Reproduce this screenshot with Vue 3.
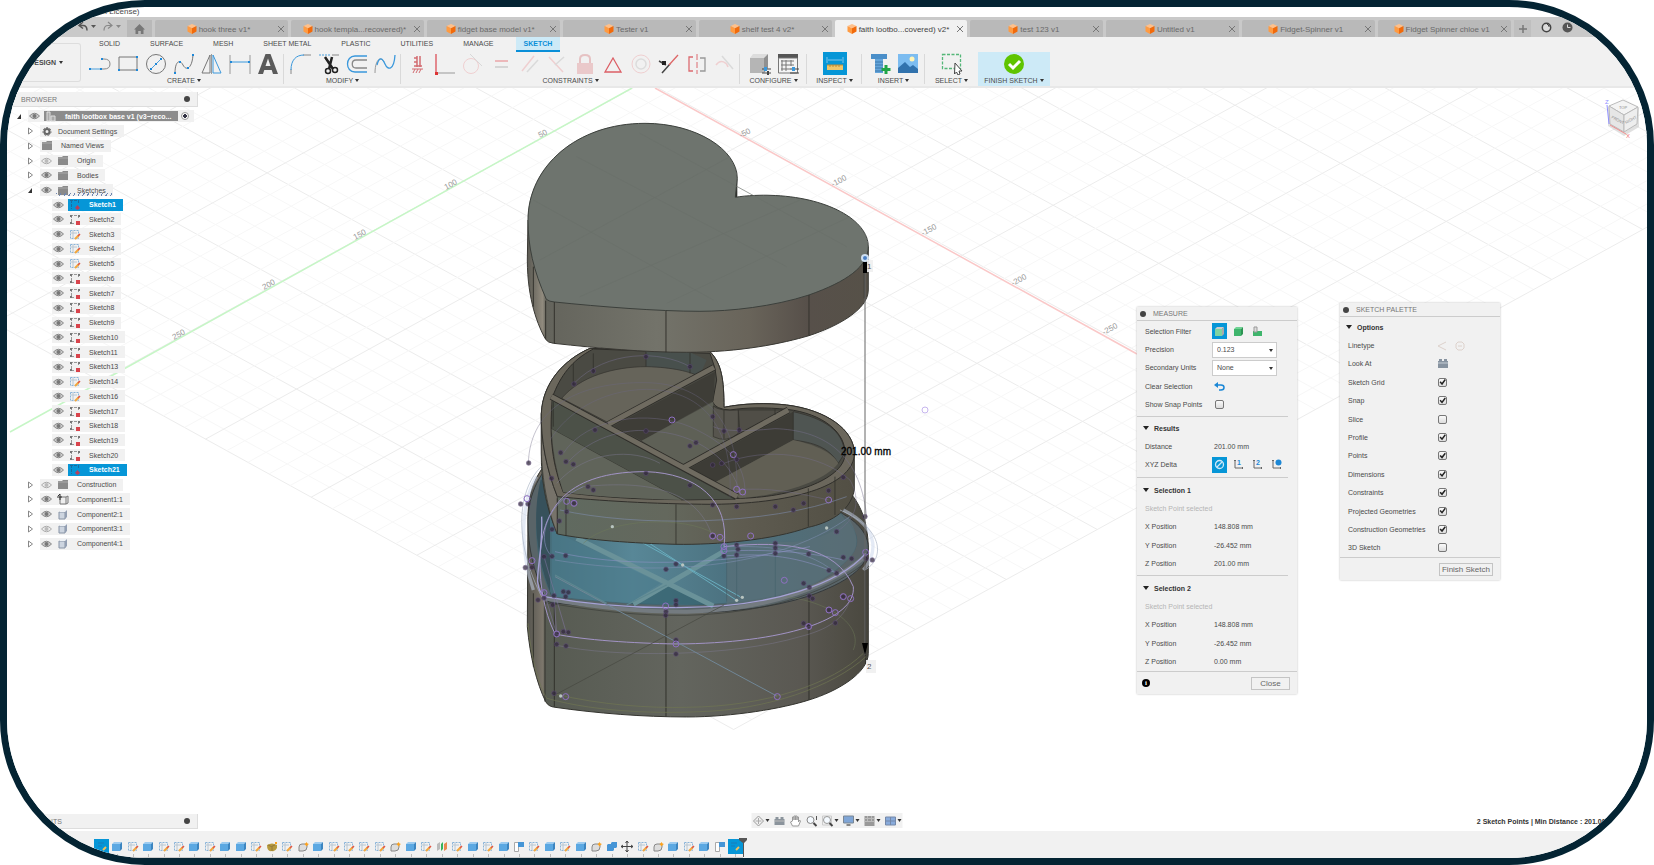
<template>
  <div class="frame">
    <header class="title-bar"><span class="title-text">Autodesk Fusion (Education License)</span></header>

    <div class="doc-bar">
      <div class="doc-left">
        <button class="plain" aria-label="Undo"><svg width="22" height="12" viewBox="0 0 22 12"><path d="M6 1 2 4.500l4 3M2 4.500h4q4 0 4 5" fill="none" stroke="#555" stroke-width="1.500" /><path d="M14 4h5l-2.500 3z" fill="#555" /></svg></button>
        <button class="plain" aria-label="Redo"><svg width="22" height="12" viewBox="0 0 22 12"><path d="M6 1l4 3.500-4 3M10 4.500H6q-4 0-4 5" fill="none" stroke="#888" stroke-width="1.200" /><path d="M14 4h5l-2.500 3z" fill="#888" /></svg></button>
        <button class="home" aria-label="Home"><svg width="11" height="10" viewBox="0 0 11 10"><path d="M5.500 0 11 5.500H9.500V10H6.800V7H4.200v3H1.500V5.500H0z" fill="#777" /></svg></button>
      </div>
      <div class="doc-tabs">
        <div v-for="tab in docTabs" :key="tab" class="doc-tab" :class="{ active: tab === activeTab }">
          <button class="doc-name" @click="activeTab = tab">
            <svg width="10" height="10" viewBox="0 0 10 10"><path d="M5 0l4.500 2L5 4.200.5 2z" fill="#ffc08a" /><path d="M.5 2 5 4.200V10L.5 7.600z" fill="#ff9b42" /><path d="M9.500 2 5 4.200V10l4.500-2.400z" fill="#f26a0a" /></svg>
            <span>{{ tab }}</span>
          </button>
          <button class="plain close" aria-label="Close tab"><svg width="6" height="6" viewBox="0 0 6 6"><path d="M0 0l6 6M6 0L0 6" stroke="#777" /></svg></button>
        </div>
      </div>
      <div class="doc-right">
        <button class="add" aria-label="New tab"><svg width="8" height="8" viewBox="0 0 8 8"><path d="M4 0v8M0 4h8" stroke="#777" stroke-width="1.500" /></svg></button>
        <svg width="11" height="11" viewBox="0 0 11 11"><circle cx="5.500" cy="5.500" r="4.200" fill="#ddd" stroke="#444" stroke-width="1.500" /><path d="M5 1l3 3M8 2v3" stroke="#444" /></svg>
        <svg width="11" height="11" viewBox="0 0 11 11"><circle cx="5.500" cy="5.500" r="5" fill="#555" /><path d="M5.500 2.500v3h3" fill="none" stroke="#ddd" /></svg>
      </div>
    </div>

    <section class="ribbon">
      <button class="workspace">DESIGN <i class="caret"></i></button>
      <div class="ribbon-main">
        <nav class="ribbon-tabs">
          <button v-for="t in ribbonTabs" :key="t" :class="{ active: t === ribbonTab }" @click="ribbonTab = t">{{ t }}</button>
        </nav>
        <div class="groups">
          <div v-for="g in groups" :key="g.name" class="group" :class="g.cls">
            <div class="tools">
              <button v-for="i in g.icons" :key="i" class="tool" :aria-label="i">
                <svg width="22" height="22" viewBox="0 0 22 22" fill="none" v-html="icons[i]"></svg>
              </button>
            </div>
            <button class="group-name">{{ g.name }} <i class="caret"></i></button>
          </div>
        </div>
      </div>
    </section>

    <main class="viewport">
      <svg class="scene" viewBox="7 88 1640 743" preserveAspectRatio="xMidYMid slice">
        <defs>
          <linearGradient id="side" x1="0" x2="1">
            <stop offset="0" stop-color="#5a5952" />
            <stop offset="0.045" stop-color="#918b7e" />
            <stop offset="0.055" stop-color="#64645c" />
            <stop offset="0.38" stop-color="#73736a" />
            <stop offset="0.65" stop-color="#69645a" />
            <stop offset="0.82" stop-color="#57504a" />
            <stop offset="1" stop-color="#565148" />
          </linearGradient>
          <linearGradient id="base" x1="0" x2="1">
            <stop offset="0" stop-color="#55544e" />
            <stop offset="0.045" stop-color="#7c766b" />
            <stop offset="0.055" stop-color="#575b52" />
            <stop offset="0.45" stop-color="#63655e" />
            <stop offset="0.8" stop-color="#5a5852" />
            <stop offset="1" stop-color="#4a483f" />
          </linearGradient>
          <linearGradient id="water" x1="0" x2="1">
            <stop offset="0" stop-color="#436874" />
            <stop offset="0.3" stop-color="#588797" />
            <stop offset="0.6" stop-color="#4c7280" />
            <stop offset="1" stop-color="#566970" />
          </linearGradient>
          <linearGradient id="trayside" x1="0" x2="1">
            <stop offset="0" stop-color="#5f6a60" />
            <stop offset="0.4" stop-color="#64685d" />
            <stop offset="0.65" stop-color="#5e5b50" />
            <stop offset="1" stop-color="#524f44" />
          </linearGradient>
        </defs>

        <!-- ground grid -->
        <g stroke-width="1">
          <line v-for="(l, n) in gridLines" :key="n" :x1="l.x1" :y1="l.y1" :x2="l.x2" :y2="l.y2" :stroke="l.major ? '#ececec' : '#f7f7f7'" />
        </g>
        <path d="M632 88 10 432" stroke="#c6f6c6" stroke-width="1.500" />
        <path d="M655 88 1137 354" stroke="#fac8c8" stroke-width="1.500" />
        <text v-for="a in axisLabels" :key="a.t" class="axis" :transform="`translate(${a.x} ${a.y}) rotate(-28)`">{{ a.t }}</text>

        <g transform="translate(500 330) scale(0.3333)" stroke-linejoin="round">
          <!-- bottom box -->
          <path d="M84 560C84 400 200 300 435 285L1000 440C1080 500 1105 570 1105 660V970C1105 1030 1010 1085 927 1110 850 1135 700 1161 560 1161 430 1161 290 1150 165 1132Q145 1130 137 1115C110 1060 90 980 82 890Z" fill="url(#base)" stroke="#33332e" stroke-width="3" />
          <path :d="heart" transform="translate(0 213)" fill="#596468" stroke="#34383a" stroke-width="3" />
          <path d="M155 798C110 700 95 600 125 440L900 380 1030 560C1090 620 1080 660 1020 710 930 790 750 828 520 825 380 822 250 812 155 798Z" fill="url(#water)" stroke="#40606b" stroke-width="2" />
          <path d="M155 798C110 690 95 560 122 450L150 440V790Z" fill="#37515b" />
          <path d="M680 640 850 635C960 640 1030 590 1045 560 1090 640 1070 670 1020 710 930 790 800 815 680 825Z" fill="#5a6f77" opacity=".7" />
          <path d="M155 740V600L340 690 480 760 390 820 165 800Z" fill="#4b7c8c" opacity=".6" />
          <path d="M390 822 500 765 640 825Z" fill="#2f5b68" opacity=".6" />
          <path d="M230 625 640 828M670 665 400 822" stroke="#6a9299" stroke-width="15" />
          <path d="M165 735 320 820M500 765 380 825" stroke="#5d8790" stroke-width="4" />
          <path d="M340 590 720 800M410 615 710 811" stroke="#68adbe" stroke-width="3" />
          <path d="M680 680V815M710 660V805M826 650V800" stroke="#45626c" stroke-width="2" />
          <path d="M133 805C300 835 420 845 560 845 820 840 1000 760 1095 680" fill="none" stroke="#747b80" stroke-width="12" />
          <path d="M135 818C300 845 420 858 560 856 820 850 1010 775 1104 690" fill="none" stroke="#393c38" stroke-width="2" />
          <path d="M100 790V1010M135 815V1115M163 825V1130M498 858V1160M927 795V1110M1097 690V1000" stroke="#31312c" stroke-width="3" fill="none" />
          <path d="M165 1092C300 1125 450 1135 560 1132 800 1130 1000 1060 1090 970M84 880C95 1000 120 1070 140 1105 300 1150 500 1150 600 1145 800 1140 1000 1070 1098 980" fill="none" stroke="#6f7652" stroke-width="2" />

          <!-- tray -->
          <path d="M124 250C128 160 190 90 270 55L630 65C665 100 672 150 672 232 730 220 800 218 860 225 980 240 1063 300 1063 370V480C1050 550 980 580 925 592 820 630 650 645 528 643 400 640 260 630 172 612 150 560 124 480 124 380Z" fill="url(#trayside)" stroke="#34342f" stroke-width="3" />
          <path d="M172 500C140 420 122 330 124 250V370C128 470 150 560 172 612Z" fill="#77736a" stroke="#34342f" stroke-width="2" />
          <path d="M172 500C140 420 122 330 124 250 128 160 190 90 270 55L630 65C665 100 672 150 672 232 730 220 800 218 860 225 980 240 1063 300 1063 370 1063 460 900 520 640 523 450 522 300 512 172 500Z" fill="#6b675c" stroke="#302f2b" stroke-width="3" />
          <path d="M190 487C160 410 145 330 158 200 180 140 215 90 280 57L630 70 645 115 650 150 638 215Q645 238 690 240C740 232 800 232 860 238 970 250 1040 310 1035 375 1030 440 900 500 720 505 500 515 330 505 190 487Z" fill="#4a4a43" stroke="#2d2c28" stroke-width="3" />
          <path d="M438 60 560 62 620 90 600 135 438 110Z" fill="#48504d" />
          <path d="M185 205C240 140 340 110 440 110 520 112 570 125 600 140L325 278Z" fill="#66645a" stroke="#33322d" stroke-width="2" />
          <path d="M340 288 645 125 640 212 425 332Z" fill="#3e3d37" />
          <path d="M425 332 640 215V310L670 330 730 310 545 405Z" fill="#5e6056" />
          <path d="M640 228Q660 245 715 240V310Q680 340 640 320Z" fill="#57554e" stroke="#302f2b" stroke-width="2" />
          <path d="M715 240 850 240 720 312Z" fill="#504e47" stroke="#302f2b" stroke-width="2" />
          <path d="M570 415 880 245V330L640 460Z" fill="#3d3c36" />
          <path d="M880 245C970 265 1030 300 1034 370L1015 400C985 350 940 338 880 330Z" fill="#4f5552" stroke="#302f2b" stroke-width="2" />
          <path d="M640 460 880 330C950 345 1000 370 1015 400 980 450 850 495 720 505Z" fill="#615f54" />
          <path d="M156 210 155 297 545 510 705 508Z" fill="#4c5148" stroke="#302f2b" stroke-width="2" />
          <path d="M155 297 545 510Q330 505 190 487 160 400 155 297Z" fill="#60645a" />
          <path d="M154 200 712 500M325 283 642 112M552 412 865 240" stroke="#2e2d29" stroke-width="20" />
          <path d="M154 200 712 500M325 283 642 112M552 412 865 240" stroke="#6f6b60" stroke-width="15" />
          <path d="M172 505V612M198 507V618M528 523V643M925 475V590M1005 440V555M220 100V165M280 70V130M438 65V110M570 68V130M672 240V325M825 235V255M160 215V290" stroke="#32322d" stroke-width="2.500" />

          <!-- sketch geometry -->
          <g fill="none">
            <path d="M110 440C60 520 60 660 100 780M1030 540C1150 600 1125 680 1090 720" stroke="#c9d5ec" stroke-width="10" opacity=".5" />
            <path d="M124 410C60 470 30 620 130 810M1020 540C1160 600 1150 690 1095 720" stroke="#a9b4c4" stroke-width="2" />
            <path d="M120 700C120 500 240 425 438 425 590 430 690 510 672 650 860 630 1010 650 1060 770 1070 870 850 940 528 942 400 940 250 930 165 912 130 840 120 760 120 700Z" stroke="#a294c6" stroke-width="3" />
            <path d="M125 560C130 700 90 760 133 800 300 830 450 835 560 832 820 830 1020 760 1097 670" stroke="#a5a2d6" stroke-width="4" />
            <path d="M85 400C90 230 240 155 438 158 600 160 720 260 710 480M150 330C200 250 300 180 440 178 600 180 700 280 690 500" stroke="#6d6884" stroke-width="2" opacity=".6" />
            <path d="M222 160C320 60 480 60 570 110M200 400C300 290 440 300 440 303 600 305 700 400 720 490M640 290Q680 310 825 296C960 300 1080 360 1100 560" stroke="#77708f" stroke-width="2" opacity=".7" />
            <path d="M190 370C260 260 450 240 570 290 680 340 740 400 735 500M672 400C800 350 960 370 1050 450 1090 520 1060 580 1000 610M710 480C800 470 900 490 986 510" stroke="#77708f" stroke-width="2" opacity=".6" />
            <path d="M672 650C760 650 900 640 1010 730M165 690C400 730 800 740 1050 560M180 540C400 590 800 590 1040 500" stroke="#8190b4" stroke-width="2" opacity=".8" />
            <path d="M672 664C800 655 950 670 1030 690M672 678C800 668 900 680 1010 730M165 665C350 710 640 710 930 650M156 679C110 640 130 520 250 470" stroke="#8f94c8" stroke-width="2" opacity=".8" />
            <path d="M165 945C350 985 700 980 900 920 980 900 1030 870 1050 810M170 460C260 360 400 355 480 400M640 630C600 480 450 450 250 470" stroke="#7d7890" stroke-width="2" opacity=".7" />
            <path d="M130 780 170 912M132 680 200 912M162 800 170 912" stroke="#8a7cb0" stroke-width="2" opacity=".7" />
            <path d="M250 640C330 560 560 560 640 610M860 800C1000 820 1090 890 1060 960" stroke="#6f7c58" stroke-width="2" opacity=".7" />
            <path d="M165 740 830 1098" stroke="#708797" stroke-width="3" />
            <path d="M165 1095 672 825" stroke="#454740" stroke-width="2" />
            <circle v-for="(p, n) in dots" :key="'d' + n" :cx="p[0]" :cy="p[1]" r="7" fill="#33293f" opacity=".75" stroke="#5d4a78" stroke-width="2" />
            <circle v-for="(p, n) in rings" :key="'r' + n" :cx="p[0]" :cy="p[1]" r="9" stroke="#8f6fc2" stroke-width="3" />
            <circle v-for="(p, n) in lights" :key="'l' + n" :cx="p[0]" :cy="p[1]" r="5" fill="#b8c4c0" />
          </g>
        </g>

        <!-- lid -->
        <g transform="translate(500 100) scale(0.3333)" stroke-linejoin="round">
          <path d="M84 360 82 480C82 600 115 680 137 718Q143 728 160 730C300 745 430 757 560 757 720 757 850 730 927 707 1010 680 1105 630 1105 570V440L600 500Z" fill="url(#side)" stroke="#393833" stroke-width="3" />
          <path d="M712 235V292H702Z" fill="#2e2f2b" />
          <path :d="heart" fill="#6e746e" stroke="#3b3f3b" stroke-width="3" />
          <path d="M100 500V620M137 602V718M163 606V730M498 632V757M927 585V707M1093 490V595" stroke="#33322d" stroke-width="3" />
          <path d="M100 300 640 600M230 170 860 500M420 100 1040 440M120 480 690 170M240 590 900 300M500 610 1050 350" stroke="#6a706a" stroke-width="2" />
        </g>

        <!-- distance dimension -->
        <path d="M865 258V655" stroke="#666" />
        <path d="M863 262h4v11h-4zM862 643h6l-3 12z" fill="#000" />
        <circle cx="865" cy="258" r="3" fill="#4a7fc4" stroke="#cfe0f2" stroke-width="2" />
        <path d="M867 260h6v12h-6zM866 660h10v13h-10z" fill="#f0f0f0" opacity=".9" />
        <text x="867" y="269" class="mark">1</text>
        <text x="867" y="669" class="mark">2</text>
        <text x="841" y="455" class="dim">201.00 mm</text>
        <circle cx="925" cy="410" r="3" fill="none" stroke="#c6b5ee" />

        <!-- view cube -->
        <g stroke-linejoin="round">
          <path d="M1608 107v19l16 10 15-9v-19" fill="#ccc" opacity=".6" />
          <path d="M1609 106l14-6 15 7-14 8z" fill="#f4f4f4" stroke="#bbb" />
          <path d="M1609 106l15 9v17l-14-8z" fill="#e6e6e6" stroke="#bbb" />
          <path d="M1638 107l-14 8v17l13-8z" fill="#eee" stroke="#bbb" />
          <path d="M1609 124l-2-19" stroke="#8f8fff" />
          <path d="M1610 125l16 9" stroke="#f19090" />
          <text x="1605" y="104" class="cube" fill="#8f8fff">Z</text>
          <text x="1626" y="138" class="cube" fill="#f07070">X</text>
          <text x="1619" y="109" class="face">TOP</text>
          <text x="1611" y="118" class="face" transform="rotate(28 1611 118)">FRONT</text>
          <text x="1626" y="124" class="face" transform="rotate(-28 1626 124)">RIGHT</text>
        </g>
      </svg>

      <aside class="browser">
        <div class="bar"><span>BROWSER</span><i class="dot"></i></div>
        <ul class="tree">
          <li v-for="n in tree" :key="n.label" :class="['lv' + n.level, { on: n.on, hatched: n.label === 'Sketches' }]">
            <svg v-if="n.arrow" class="arrow" width="8" height="8" viewBox="0 0 8 8">
              <path v-if="n.arrow === 'open'" d="M6 2v5H2z" fill="#333" />
              <path v-else d="M2.500 1l4 3-4 3z" fill="#fff" stroke="#888" />
            </svg>
            <div class="item">
              <span v-if="n.eye" class="eye">
                <svg width="11" height="8" viewBox="0 0 11 8"><path d="M.5 4Q5.500-1.500 10.500 4 5.500 9.500.5 4z" :fill="n.eye === 'off' ? '#eee' : '#ccc'" :stroke="n.eye === 'off' ? '#aaa' : '#888'" /><circle cx="5.500" cy="4" r="2" :fill="n.eye === 'off' ? '#bbb' : '#777'" /></svg>
              </span>
              <span class="node">
                <span class="node-icon" :class="n.icon"><svg width="12" height="11" viewBox="0 0 12 11" fill="none" v-html="small[n.on ? 'picked' : n.icon]"></svg></span>
                <span>{{ n.label }}</span>
              </span>
              <input v-if="n.level === 0" type="radio" name="active-component" aria-label="Activate component" checked />
            </div>
          </li>
        </ul>
      </aside>

      <section class="panel measure">
        <div class="panel-head"><i class="dot"></i><span>MEASURE</span></div>
        <div class="rows five">
          <div class="row">
            <span>Selection Filter</span>
            <div class="opts">
              <button class="opt on" aria-label="Faces"><svg width="11" height="11" viewBox="0 0 11 11"><path d="M1 3h7v7H1z" fill="#7fd3a1" /><path d="M1 3l2-2h7L8 3z" fill="#ccc" /><path d="M8 3l2-2v7l-2 2z" fill="#aaa" /></svg></button>
              <button class="opt" aria-label="Bodies"><svg width="11" height="11" viewBox="0 0 11 11"><path d="M1 3h7v7H1z" fill="#3fb56c" /><path d="M1 3l2-2h7L8 3z" fill="#6fd394" /><path d="M8 3l2-2v7l-2 2z" fill="#2c9352" /></svg></button>
              <button class="opt" aria-label="Components"><svg width="11" height="11" viewBox="0 0 11 11"><path d="M1 5h9v5H1z" fill="#3fb56c" /><path d="M2 1h3v5H2z" fill="#ddd" stroke="#999" /></svg></button>
            </div>
          </div>
          <div class="row">
            <label for="precision">Precision</label>
            <div class="pick"><select id="precision"><option>0.123</option></select><i class="caret"></i></div>
          </div>
          <div class="row">
            <label for="units">Secondary Units</label>
            <div class="pick"><select id="units"><option>None</option></select><i class="caret"></i></div>
          </div>
          <div class="row">
            <span>Clear Selection</span>
            <button class="opt" aria-label="Clear Selection"><svg width="11" height="9" viewBox="0 0 11 9"><path d="M4 0v6L0 3z" fill="#1b87d6" /><path d="M3 3h4q3 0 3 2.500T7 8H5" fill="none" stroke="#1b87d6" stroke-width="1.500" /></svg></button>
          </div>
          <div class="row">
            <label for="snap-points">Show Snap Points</label>
            <span class="tick"><input id="snap-points" type="checkbox" /></span>
          </div>
        </div>
        <div class="rows three">
          <div class="row sub"><i class="fold"></i>Results</div>
          <div class="row"><span>Distance</span><span class="val">201.00 mm</span></div>
          <div class="row">
            <span>XYZ Delta</span>
            <div class="opts">
              <button class="opt on" aria-label="None"><svg width="11" height="11" viewBox="0 0 11 11"><circle cx="5.500" cy="5.500" r="4" fill="none" stroke="#cfe9f8" stroke-width="1.300" /><path d="M3 8l5-5" stroke="#cfe9f8" stroke-width="1.300" /></svg></button>
              <button v-for="d in ['1', '2', '']" :key="d" class="opt delta" :aria-label="'Delta ' + d">
                <svg width="11" height="11" viewBox="0 0 11 11"><path d="M2 1v8h8M1 2l1-1 1 1M9 8l1 1-1 1" fill="none" stroke="#666" /><circle v-if="!d" cx="7.500" cy="3.500" r="3" fill="#1b87d6" /></svg><b v-if="d">{{ d }}</b>
              </button>
            </div>
          </div>
        </div>
        <div v-for="s in selections" :key="s.title" class="rows five">
          <div class="row sub"><i class="fold"></i>{{ s.title }}</div>
          <div class="row muted">Sketch Point selected</div>
          <div v-for="p in s.points" :key="p[0]" class="row"><span>{{ p[0] }}</span><span class="val">{{ p[1] }}</span></div>
        </div>
        <div class="panel-foot"><i class="info">i</i><button class="btn">Close</button></div>
      </section>

      <section class="panel palette">
        <div class="panel-head"><i class="dot"></i><span>SKETCH PALETTE</span></div>
        <div class="rows thirteen">
          <div class="row sub"><i class="fold"></i>Options</div>
          <div class="row">
            <span>Linetype</span>
            <span class="types">
              <svg width="10" height="10" viewBox="0 0 10 10"><path d="M9 1 1 5l8 4" fill="none" stroke="#ddd2cc" /></svg>
              <svg width="10" height="10" viewBox="0 0 10 10"><path d="M3 1h4l2 2v4L7 9H3L1 7V3zM3 5h4" fill="none" stroke="#ddd2cc" /></svg>
            </span>
          </div>
          <div class="row">
            <span>Look At</span>
            <button class="look" aria-label="Look At"><svg width="10" height="9" viewBox="0 0 10 9"><path d="M0 2h10v7H0zM1 0h3v2H1zM6 0h3v2H6z" fill="#8793a0" /><path d="M0 4h10" stroke="#c6ced6" /></svg></button>
          </div>
          <div v-for="o in options" :key="o.label" class="row">
            <label :for="o.label">{{ o.label }}</label>
            <span class="tick"><input :id="o.label" v-model="o.on" type="checkbox" /></span>
          </div>
        </div>
        <div class="panel-foot"><button class="btn">Finish Sketch</button></div>
      </section>

      <div class="bar comments"><span>COMMENTS</span><i class="dot"></i></div>

      <nav class="nav-bar">
        <button v-for="n in navTools" :key="n.name" :aria-label="n.name">
          <svg width="12" height="12" viewBox="0 0 12 12" fill="none" v-html="n.svg"></svg><i v-if="n.menu" class="caret"></i>
        </button>
      </nav>
      <p class="status">2 Sketch Points | Min Distance : 201.00 mm</p>
    </main>

    <footer class="timeline">
      <div class="track">
        <button v-for="(f, n) in features" :key="n" class="feature" :class="{ on: n === 0 || n === 41 }" :aria-label="'Feature ' + (n + 1)">
          <svg width="12" height="11" viewBox="0 0 12 11" fill="none" v-html="small[f]"></svg>
        </button>
        <svg class="playhead" width="8" height="19" viewBox="0 0 8 19"><path d="M0 0h8v2L5 5v14H4V5L0 2z" fill="#555" /></svg>
      </div>
    </footer>
  </div>
</template>

<script setup>
import { ref } from 'vue'

const docTabs = [
  'hook three v1*', 'hook templa...recovered)*', 'fidget base model v1*', 'Tester v1', 'shelf test 4 v2*',
  'faith lootbo...covered) v2*', 'test 123 v1', 'Untitled v1', 'Fidget-Spinner v1', 'Fidget Spinner chloe v1'
]
const activeTab = ref('faith lootbo...covered) v2*')
const ribbonTabs = ['SOLID', 'SURFACE', 'MESH', 'SHEET METAL', 'PLASTIC', 'UTILITIES', 'MANAGE', 'SKETCH']
const ribbonTab = ref('SKETCH')

const groups = [
  { name: 'CREATE', icons: ['line', 'rect', 'circle', 'spline', 'mirror', 'dimension', 'text'] },
  { name: 'MODIFY', icons: ['fillet', 'trim', 'offset', 'curve'] },
  { name: 'CONSTRAINTS', icons: ['ground', 'perp', 'tangent', 'equal', 'parallel', 'perpendicular', 'lock', 'triangle', 'concentric', 'midpoint', 'symmetry', 'curvature'] },
  { name: 'CONFIGURE', icons: ['configure', 'table'] },
  { name: 'INSPECT', icons: ['measure'], cls: 'inspect' },
  { name: 'INSERT', icons: ['bolt', 'image'] },
  { name: 'SELECT', icons: ['select'], cls: 'last' },
  { name: 'FINISH SKETCH', icons: ['finish'], cls: 'finish' }
]

const icons = {
  line: '<path d="M1 16h11" stroke="#4a9fdc"/><path d="M13 6h2q6 0 6 5t-6 5h-3" stroke="#888"/><path d="M0 15h2v2H0zM11 15h2v2h-2zM12 5h2v2h-2z" fill="#1e88d8"/>',
  rect: '<path d="M2 4h18v13H2z" stroke="#777"/><path d="M1 16h2v2H1zM19 16h2v2h-2zM19 3h2v2h-2z" fill="#1e88d8"/>',
  circle: '<circle cx="11" cy="11" r="9.500" stroke="#777"/><path d="M5 17 17 5" stroke="#4a9fdc"/><path d="M5 15h2v2H5zM15 5h2v2h-2zM10 10h2v2h-2z" fill="#1e88d8"/>',
  spline: '<path d="M2 20C2 8 7 6 10 12S19 16 20 2" stroke="#777"/><path d="M1 19h2v2H1zM6 8h2v2H6zM14 14h2v2h-2zM19 1h2v2h-2z" fill="#1e88d8"/>',
  mirror: '<path d="M9 2v18H1z" stroke="#777"/><path d="M12 2v18h8z" stroke="#3a98dc"/><path d="M10.500 1v20" stroke="#999"/>',
  dimension: '<path d="M1 2v19M21 2v19" stroke="#999"/><path d="M2 9h18" stroke="#3a98dc"/><path d="M1 8h2v2H1zM19 8h2v2h-2z" fill="#1e88d8"/>',
  text: '<path d="M8.500 1h5L21 21h-5l-1.300-4H7.300L6 21H1zM8.500 13h5L11 5.500z" fill="#5b5b5b"/>',
  fillet: '<path d="M1 21v-5M13 2h8" stroke="#888"/><path d="M1 17C1 7 6 2 14 2" stroke="#3a98dc"/>',
  trim: '<path d="M1 2h12" stroke="#4a9fdc" stroke-dasharray="2 1"/><path d="M14 2h7" stroke="#888"/><path d="M7 4l8 12M14 4l-3 12" stroke="#222" stroke-width="2.500"/><circle cx="10" cy="18" r="2.500" stroke="#222" stroke-width="1.500"/><circle cx="17" cy="17" r="2.500" stroke="#222" stroke-width="1.500"/>',
  offset: '<path d="M21 3H9C-1 3-1 19 9 19h12" stroke="#3a98dc" stroke-width="1.300"/><path d="M21 7H10c-5 0-5 8 0 8h11" stroke="#888" stroke-width="1.300"/>',
  curve: '<path d="M1 20C1 8 6 2 10 9" stroke="#999"/><path d="M3 12C5 4 8 4 11 11s9 6 10-9" stroke="#3a98dc" stroke-width="1.300"/>',
  ground: '<path d="M11 3v6M11 9v5M8 5h3M14 3v11M8 9h3M8 13h8" stroke="#d26b70" stroke-width="1.500"/><path d="M6 16h11M7 20l2-4M10 20l2-4M13 20l2-4" stroke="#d26b70"/>',
  perp: '<path d="M2 1v19" stroke="#dc5058" stroke-width="1.300"/><path d="M2 20h19" stroke="#999"/><path d="M1 19h3v3H1z" fill="#d33"/>',
  tangent: '<circle cx="9" cy="13" r="7.500" stroke="#efcfd0"/><path d="M8 1l12 12" stroke="#d8d8d8"/>',
  equal: '<path d="M5 8h13" stroke="#ecb8ba" stroke-width="2"/><path d="M5 14h13" stroke="#d5d5d5" stroke-width="2"/>',
  parallel: '<path d="M4 18 16 3" stroke="#efcfd0" stroke-width="1.500"/><path d="M9 19 20 7" stroke="#dadada" stroke-width="1.500"/>',
  perpendicular: '<path d="M3 4l14 15" stroke="#efcfd0" stroke-width="1.500"/><path d="M9 12l9-8" stroke="#dadada" stroke-width="1.500"/>',
  lock: '<path d="M3 10h16v11H3z" fill="#eac9ca"/><path d="M6 10V6q0-4 5-4t5 4v4" stroke="#e6c2c3" stroke-width="2"/>',
  triangle: '<path d="M11 5l8 14H3z" stroke="#dc5f66" stroke-width="1.300"/>',
  concentric: '<circle cx="11" cy="11" r="9" stroke="#efcfd0"/><circle cx="11" cy="11" r="5" stroke="#dcdcdc" stroke-width="1.500"/>',
  midpoint: '<path d="M1 8l7 4M4 20 12 11" stroke="#444" stroke-width="1.500"/><path d="M11 12 20 2" stroke="#d66" stroke-width="1.300"/><path d="M4 8h4v4H4z" fill="#222"/>',
  symmetry: '<path d="M7 4H3v14h4" stroke="#dc6b70" stroke-width="1.300"/><path d="M11 1v20" stroke="#dc6b70" stroke-dasharray="6 2"/><path d="M14 5h5v13h-5" stroke="#999" stroke-width="1.300"/>',
  curvature: '<path d="M2 12C7 5 13 10 14 14" stroke="#efcfd0" stroke-width="1.500"/><path d="M8 3l11 13" stroke="#dadada" stroke-width="1.500"/>',
  configure: '<path d="M1 5h14v15H1z" fill="#b5b5b5"/><path d="M1 5l3-4h15l-4 4z" fill="#ddd"/><path d="M15 5l4-4v14l-4 5z" fill="#909090"/><path d="M13 16h9M13 20h9" stroke="#444"/><path d="M15 14h3v4h-3z" fill="#3a98dc"/><path d="M18 18h2v4h-2z" fill="#444"/>',
  table: '<path d="M1 1h20v4H1z" fill="#555"/><path d="M1.500 5h19v15h-19z" fill="#f4f4f4" stroke="#777"/><path d="M4 8h13M4 12h13M4 16h9M5 7v11M9 7v11M14 7v6" stroke="#777"/><path d="M13 16h9M13 20h9" stroke="#444"/><path d="M15 14h3v4h-3z" fill="#3a98dc"/>',
  measure: '<path d="M3 4v6M19 4v6M4 7h14" stroke="#7cc4ec"/><path d="M3 12h16v5H3z" fill="#f0c66b"/><path d="M3 12h16M6 12v2M9 12v2M12 12v2M15 12v2" stroke="#b98c38"/>',
  bolt: '<path d="M2 1h16v5H2z" fill="#4b8fc9"/><path d="M6 6h8v14H6z" fill="#64a5da"/><path d="M6 9h8M6 12h8M6 15h8M6 18h8" stroke="#3c79ad"/><path d="M17 12v9M12.500 16.500h9" stroke="#21a548" stroke-width="3"/>',
  image: '<path d="M1 1h20v19H1z" fill="#7cbcf0"/><path d="M1 15l7-6 5 5 3-2 5 4v4H1z" fill="#3172ad"/><circle cx="15" cy="6" r="2.500" fill="#fff4b8"/>',
  select: '<path d="M1.500 1.500h18v14h-18z" stroke="#55b779" stroke-width="1.300" stroke-dasharray="3 1.500"/><path d="M14 10l7 8-3 0 1 3-2 1-1.500-3-2 2z" fill="#fff" stroke="#444"/>',
  finish: '<circle cx="11" cy="11" r="10" fill="#5fc400"/><path d="M6 11l4 4 7-7" stroke="#fff" stroke-width="3"/>'
}

// glyphs shared by the browser tree and the timeline
const small = {
  root: '<path d="M2 1h3v9H2zM6 5h4v5H6z" fill="#aaa" stroke="#ddd"/>',
  gear: '<circle cx="6" cy="5.500" r="2.500" stroke="#666" stroke-width="2"/><circle cx="6" cy="5.500" r="4" stroke="#666" stroke-dasharray="2 1.500"/>',
  folder: '<path d="M1 2h4l1-1h5v9H1z" fill="#8a8a8a"/><path d="M1 3h10" stroke="#aaa"/>',
  locked: '<path d="M2.500 1v9M1 1.500h9M2 9.500h4M9.500 1v4" stroke="#999" stroke-dasharray="3 1"/><path d="M1 1h2v2H1zM9 1h2v2H9zM1 8h2v2H1z" fill="#777"/><path d="M7 7h4v4H7z" fill="#d8444c"/>',
  picked: '<path d="M2.500 1v9M1 1.500h9M9.500 1v4" stroke="#1b6da0" stroke-dasharray="3 1"/><path d="M6 9l2.500-3L11 9l-2.500 2z" fill="#b8405c"/>',
  sketch: '<path d="M1.500 1.500h8v8h-8z" stroke="#8bb4d8" stroke-dasharray="2 1"/><path d="M2 4h6M4 2v7" stroke="#b8c6d2"/><path d="M6 10l4-4" stroke="#f2a73c" stroke-width="2"/><path d="M9 7l2-2" stroke="#e0554a" stroke-width="1.500"/>',
  edited: '<path d="M2 2h6M2 5h4" stroke="#1b7db8"/><path d="M7 9l3-3" stroke="#f2c05c" stroke-width="2"/>',
  component: '<path d="M2 3h6v7H2z" fill="#cdd5e0" stroke="#8793a5"/><path d="M2 3l2-2h6L8 3z" fill="#eef1f5"/><path d="M8 3l2-2v7l-2 2z" fill="#939fb3"/>',
  linked: '<path d="M3 3h6v7H3z" fill="#eee" stroke="#777"/><path d="M9 3l2-1v7l-2 1" stroke="#777"/><path d="M3 0v6M1 2l2-2M0 3h5" stroke="#333"/>',
  extrude: '<path d="M1 3h8v7H1z" fill="#5ba8e2"/><path d="M1 3l2-2h8L9 3z" fill="#9ccbf0"/><path d="M9 3l2-2v7L9 10z" fill="#3c85c0"/>',
  form: '<path d="M1 4q5-3 10 0v3q-2 4-5 3Q1 11 1 4z" fill="#b69a3d"/><path d="M2 4q3 3 7 0M6 5v5" stroke="#94793a"/><path d="M9 1h2v2H9z" fill="#ffa21a"/>',
  plane: '<path d="M2 6q0-3 3-3h5v3q0 4-4 4H2z" fill="#ddd" stroke="#888"/><path d="M9.500 1l1 1.500 1.500.5-1.500 1-1 1.500-1-1.500-1-1 1-.5z" fill="#ffa21a"/>',
  pattern: '<path d="M1 3l3-2v7L1 10z" fill="#bbb"/><path d="M5 3l2-2v7L5 10z" fill="#35b35c"/><path d="M8 3l3-2v7L8 10z" fill="#e88a50"/>',
  flag: '<path d="M1.500 1.500h4v9h-4z" fill="#fff" stroke="#aaa"/><path d="M5 1h6v5H5z" fill="#4595d6"/>',
  combine: '<path d="M1 4l1-1h3V2l1-1h5v5l-1 1H8v2l-1 1H1z" fill="#4595d6"/>',
  move: '<path d="M6 0v11M0 5.500h12M4.500 2 6 0l1.500 2M4.500 9 6 11l1.500-2M2 4 0 5.500 2 7M10 4l2 1.500L10 7" stroke="#444"/>'
}

const sketchNode = (num) => ({
  level: 2,
  eye: 'on',
  icon: [3, 4, 5, 14, 16].includes(num) ? 'sketch' : 'locked',
  label: 'Sketch' + num,
  on: num === 1 || num === 21
})

const tree = [
  { level: 0, arrow: 'open', eye: 'on', icon: 'root', label: 'faith lootbox base v1 (v3~reco...' },
  { level: 1, arrow: 'shut', icon: 'gear', label: 'Document Settings' },
  { level: 1, arrow: 'shut', icon: 'folder', label: 'Named Views' },
  { level: 1, arrow: 'shut', eye: 'off', icon: 'folder', label: 'Origin' },
  { level: 1, arrow: 'shut', eye: 'on', icon: 'folder', label: 'Bodies' },
  { level: 1, arrow: 'open', eye: 'on', icon: 'folder', label: 'Sketches' },
  ...[1, 2, 3, 4, 5, 6, 7, 8, 9, 10, 11, 13, 14, 16, 17, 18, 19, 20, 21].map(sketchNode),
  { level: 1, arrow: 'shut', eye: 'off', icon: 'folder', label: 'Construction' },
  { level: 1, arrow: 'shut', eye: 'on', icon: 'linked', label: 'Component1:1' },
  { level: 1, arrow: 'shut', eye: 'on', icon: 'component', label: 'Component2:1' },
  { level: 1, arrow: 'shut', eye: 'off', icon: 'component', label: 'Component3:1' },
  { level: 1, arrow: 'shut', eye: 'on', icon: 'component', label: 'Component4:1' }
]

const selections = [
  { title: 'Selection 1', points: [['X Position', '148.808 mm'], ['Y Position', '-26.452 mm'], ['Z Position', '201.00 mm']] },
  { title: 'Selection 2', points: [['X Position', '148.808 mm'], ['Y Position', '-26.452 mm'], ['Z Position', '0.00 mm']] }
]

const options = ref([
  { label: 'Sketch Grid', on: true },
  { label: 'Snap', on: true },
  { label: 'Slice', on: false },
  { label: 'Profile', on: true },
  { label: 'Points', on: true },
  { label: 'Dimensions', on: true },
  { label: 'Constraints', on: true },
  { label: 'Projected Geometries', on: true },
  { label: 'Construction Geometries', on: true },
  { label: '3D Sketch', on: false }
])

const navTools = [
  { name: 'Orbit', menu: true, svg: '<path d="M6 1l5 5-5 5-5-5z" stroke="#999"/><path d="M3 6h6M6 3v6" stroke="#aaa"/>' },
  { name: 'Look At', svg: '<path d="M1 4h10v6H1zM2 2h3v2H2zM7 2h3v2H7z" fill="#8b949c"/><path d="M1 6h10" stroke="#bbb"/>' },
  { name: 'Pan', svg: '<path d="M3 11 1 7l2-1V2h1.500v3V1H6v4-4h1.500v4V2H9v5l1-2 1 1-2 5z" fill="#fff" stroke="#999"/>' },
  { name: 'Zoom', svg: '<circle cx="5" cy="5" r="3.500" fill="#f5faff" stroke="#888"/><path d="M8 8l3 3" stroke="#444" stroke-width="2"/><path d="M11 1v4" stroke="#555"/>' },
  { name: 'Fit', menu: true, svg: '<path d="M1 1h9v9H1z" stroke="#ccc"/><circle cx="5.500" cy="5" r="3.500" fill="#f5faff" stroke="#999"/><path d="M8 8l3 3" stroke="#444" stroke-width="2"/>' },
  { name: 'Display', menu: true, svg: '<path d="M1 1h10v7H1z" fill="#7fa5d6" stroke="#7b8794"/><path d="M4 10h4" stroke="#888" stroke-width="2"/>' },
  { name: 'Grid', menu: true, svg: '<path d="M1 1h10v10H1z" fill="#999"/><path d="M1 3.500h10M1 6.500h10M4 1v5M8 1v5" stroke="#bbb"/>' },
  { name: 'Viewports', menu: true, svg: '<path d="M1 2h10v8H1z" fill="#88abdc" stroke="#7488a8"/><path d="M6 2v8M1 6h10" stroke="#7488a8"/>' }
]

const codes = { s: 'sketch', e: 'extrude', o: 'form', p: 'plane', m: 'pattern', f: 'flag', c: 'combine', v: 'move', a: 'edited' }
const features = [...'aesessesees' + 'ospesssspesmsesefsesepcvspesefa'].map((c) => codes[c])

const heart = 'M139 598C100 510 84 440 84 360 84 200 230 70 435 70 590 70 712 150 712 235L706 292C740 286 790 285 810 286 980 290 1105 360 1105 440 1105 500 1040 545 927 585 820 620 690 634 600 634 470 634 300 620 163 606Q148 605 139 598Z'

const dots = [
  [222, 162], [280, 123], [438, 80], [570, 110], [638, 260], [672, 303], [718, 300], [438, 303], [285, 300],
  [570, 348], [588, 338], [182, 368], [198, 395], [220, 403], [638, 405], [665, 400], [710, 388], [86, 399], [155, 445], [280, 480],
  [264, 470], [438, 430], [570, 466], [62, 522], [84, 522], [222, 520], [178, 573], [200, 545], [638, 525], [710, 530], [826, 530],
  [880, 540], [911, 520], [986, 482], [1030, 442], [1095, 560], [156, 598], [638, 618], [132, 680], [156, 679], [197, 677],
  [672, 678], [710, 645], [714, 658], [710, 675], [826, 640], [826, 654], [826, 670], [926, 672], [1010, 605], [1030, 682],
  [1055, 686], [1098, 686], [1117, 690], [76, 713], [96, 712], [987, 721], [1010, 730], [911, 760], [928, 772], [928, 798],
  [938, 806], [114, 810], [132, 804], [158, 825], [162, 797], [190, 785], [205, 787], [197, 800], [528, 812], [498, 845], [497, 856],
  [528, 824], [170, 912], [190, 905], [205, 907], [528, 930], [528, 972], [170, 943], [198, 948], [911, 880], [926, 888], [1030, 800],
  [987, 840], [1006, 879], [498, 718], [528, 702], [162, 1090]
]
const rings = [
  [516, 270], [700, 374], [710, 478], [200, 514], [81, 506], [222, 520], [752, 618], [660, 622], [638, 618], [672, 650], [672, 662],
  [96, 692], [1097, 667], [132, 788], [497, 828], [853, 751], [1030, 800], [1052, 806], [987, 840], [1006, 848], [986, 510],
  [170, 912], [528, 942], [926, 890], [832, 1100], [197, 1100], [728, 486]
]
const lights = [[337, 590], [548, 705], [710, 811], [980, 594], [182, 1098], [727, 802]]

// both line families stop at the near corner of the plane
const gridLines = []
for (let k = -28; k <= 30; k++) {
  const c = -274 + k * 20
  const end = (1133 - c) / 1.1
  gridLines.push({ x1: 0, y1: c, x2: end, y2: c + end * 0.55, major: k % 5 === 0 })
}
for (let k = -15; k <= 30; k++) {
  const d = 436 + (k * 697) / 30
  const start = (d - 326) / 1.1
  gridLines.push({ x1: start, y1: d - start * 0.55, x2: 1660, y2: d - 913, major: k % 5 === 0 })
}

const axisLabels = [
  { t: '50', x: 540, y: 138 }, { t: '100', x: 446, y: 190 }, { t: '150', x: 355, y: 240 }, { t: '200', x: 264, y: 290 },
  { t: '250', x: 174, y: 340 }, { t: '-50', x: 741, y: 138 }, { t: '-100', x: 833, y: 187 }, { t: '-150', x: 923, y: 236 },
  { t: '-200', x: 1013, y: 286 }, { t: '-250', x: 1104, y: 335 }
]
</script>

<style>
body {
  margin: 0;
  background: #fff;
}
</style>

<style scoped>
.frame {
  box-sizing: border-box;
  height: 100vh;
  border: 7px solid #042433;
  border-radius: 145px;
  overflow: hidden;
  display: flex;
  flex-direction: column;
  background: #fff;
  font-family: "Liberation Sans", Arial, sans-serif;
  font-size: 7px;
  color: #4a4a4a;
}

button {
  font: inherit;
  color: inherit;
  background: none;
  border: 0;
  padding: 0;
  display: flex;
  align-items: center;
  justify-content: center;
}

svg {
  display: block;
  flex: none;
}

.caret {
  border: 2px solid transparent;
  border-top: 3px solid #333;
  border-bottom: 0;
}

.dot {
  width: 6px;
  height: 6px;
  border-radius: 50%;
  background: #444;
}

.title-bar {
  height: 10px;
  line-height: 9px;
  font-size: 8px;
}

.title-text {
  display: block;
  width: 132px;
  text-align: right;
  white-space: nowrap;
}

/* document tabs */
.doc-bar {
  height: 20px;
  display: flex;
  background: #c9c9c9;
}

.doc-left {
  width: 148px;
  display: flex;
  justify-content: flex-end;
  gap: 3px;
  padding-right: 3px;
  box-sizing: border-box;
}

.home {
  width: 25px;
  background: #b9b9b9;
  margin-top: 3px;
}

.doc-tabs {
  flex: 1;
  display: flex;
  gap: 3px;
  padding-top: 3px;
}

.doc-tab {
  flex: 1;
  display: flex;
  background: #b9b9b9;
  border-radius: 2px 2px 0 0;
  font-size: 8px;
  color: #6a6a6a;
  padding-right: 4px;
}

.doc-tab.active {
  background: #f1f1f1;
  color: #444;
}

.doc-name {
  flex: 1;
  gap: 2px;
  padding: 1px 0 0 4px;
  white-space: nowrap;
}

.doc-right {
  width: 136px;
  display: flex;
  align-items: center;
  gap: 10px;
}

.add {
  width: 17px;
  height: 17px;
  margin: 3px 0 0 3px;
  background: #bfbfbf;
}

/* ribbon */
.ribbon {
  height: 51px;
  box-sizing: border-box;
  display: flex;
  background: #f1f1f1;
  border-bottom: 2px solid #e8e8e8;
}

.workspace {
  width: 74px;
  height: 39px;
  margin-top: 6px;
  border: 1px solid #ddd;
  border-left: 0;
  border-radius: 3px;
  font-weight: bold;
  justify-content: flex-end;
  padding-right: 17px;
  box-sizing: border-box;
  gap: 3px;
}

.ribbon-main {
  flex: 1;
}

.ribbon-tabs {
  display: flex;
  gap: 14px;
  padding-left: 10px;
  height: 15px;
}

.ribbon-tabs button {
  padding: 0 8px;
  border-bottom: 2px solid transparent;
}

.ribbon-tabs .active {
  background: #cdeaf7;
  color: #0a8fd8;
  border-color: #0a8fd8;
  font-weight: bold;
}

.groups {
  display: grid;
  grid-template-columns: 200px 117px 339px 67px 55px 63px 53px 72px;
  padding-left: 3px;
}

.group {
  height: 34px;
  position: relative;
}

.group::after {
  content: "";
  position: absolute;
  right: 0;
  top: 2px;
  height: 30px;
  border-right: 1px solid #d9d9d9;
}

.group.last::after,
.group.finish::after {
  display: none;
}

.tools {
  display: flex;
  justify-content: center;
  gap: 6px;
  height: 23px;
}

.inspect .tool {
  background: #0696d7;
  padding: 0 1px;
}

.group-name {
  width: 100%;
  height: 11px;
  gap: 2px;
}

.finish {
  background: #cdeaf7;
}

/* canvas */
.viewport {
  flex: 1;
  min-height: 0;
  position: relative;
  background: #fff;
}

.scene {
  position: absolute;
  inset: 0;
  width: 100%;
  height: 100%;
}

.axis {
  font-size: 8px;
  fill: #999;
}

.mark {
  font-size: 8px;
  fill: #555;
}

.dim {
  font-size: 10px;
  fill: #000;
  stroke: #000;
  stroke-width: 0.3px;
}

.cube {
  font-size: 6px;
}

.face {
  font-size: 4px;
  fill: #888;
}

.bar {
  height: 15px;
  box-sizing: border-box;
  display: flex;
  align-items: center;
  justify-content: space-between;
  padding: 0 7px 0 14px;
  background: #f1f1f1;
  border-right: 1px solid #ddd;
  border-bottom: 1px solid #ddd;
  color: #777;
}

.browser {
  position: absolute;
  left: 0;
  top: 4px;
  width: 191px;
}

.comments {
  position: absolute;
  left: 0;
  bottom: 2px;
  width: 191px;
}

.tree {
  list-style: none;
  margin: 2px 0 0;
  padding: 0;
  height: 442px;
  display: grid;
  grid-auto-rows: 1fr;
}

.tree li {
  display: flex;
  align-items: center;
  white-space: nowrap;
}

.lv0 {
  padding-left: 8px;
  gap: 5px;
}

.lv1 {
  padding-left: 19px;
  gap: 6px;
}

.lv2 {
  padding-left: 45px;
}

.item {
  display: flex;
  align-items: center;
  height: 12px;
  background: #f1f1f1;
}

.eye {
  width: 16px;
  padding-left: 1px;
  box-sizing: border-box;
}

.node {
  display: flex;
  align-items: center;
  height: 100%;
  gap: 5px;
  padding-right: 7px;
}

.node-icon {
  width: 16px;
  padding-left: 1px;
  box-sizing: border-box;
}

.node-icon.gear {
  width: 13px;
}

.hatched .node {
  position: relative;
}

.hatched .node::after {
  content: "";
  position: absolute;
  left: 0;
  right: 0;
  bottom: 0;
  height: 3px;
  background: repeating-linear-gradient(120deg, #6f86b0 0 1px, transparent 1px 4px);
}

.lv0 .node {
  height: 10px;
  background: #8c8c8c;
  color: #fff;
  font-weight: bold;
}

.on .node {
  background: #0696d7;
  color: #fff;
  font-weight: bold;
}

.item input {
  appearance: none;
  width: 8px;
  height: 8px;
  margin: 0 5px 0 3px;
  border: 1px solid #999;
  border-radius: 50%;
  background: radial-gradient(circle, #334 0 2px, #fff 2px);
}

/* dialogs */
.panel {
  position: absolute;
  width: 160px;
  background: #f1f1f1;
  box-shadow: 0 0 2px #bbb;
}

.measure {
  top: 219px;
  right: 350px;
}

.palette {
  top: 215px;
  right: 147px;
}

.panel-head {
  height: 13px;
  display: flex;
  align-items: center;
  gap: 6px;
  padding-left: 3px;
  border-bottom: 1px solid #ccc;
  color: #777;
}

.panel-head .dot {
  margin-right: 1px;
}

.rows {
  display: grid;
  grid-auto-rows: 1fr;
  margin-right: 9px;
  padding: 1px 0 2px;
  border-bottom: 1px solid #ccc;
}

.five {
  height: 92px;
}

.three {
  height: 55px;
  padding: 2px 0 3px;
}

.five ~ .five {
  padding: 3px 0 2px;
}

.five:nth-last-child(2) {
  margin-right: 0;
  padding-bottom: 0;
}

.thirteen {
  height: 239px;
  margin-right: 0;
  padding-bottom: 0;
}

.row {
  display: grid;
  grid-template-columns: 67px 1fr;
  align-items: center;
  padding-left: 8px;
  white-space: nowrap;
}

.palette .row {
  grid-template-columns: 87px 1fr;
}

.row.sub {
  display: flex;
  gap: 5px;
  padding-left: 6px;
  font-weight: bold;
  color: #333;
}

.fold {
  border: 3px solid transparent;
  border-top: 4px solid #222;
  border-bottom: 0;
}

.muted {
  color: #b5b5b5;
}

.val {
  padding-left: 2px;
}

.opts {
  display: flex;
  gap: 4px;
}

.opt {
  width: 15px;
  height: 16px;
  position: relative;
}

.opt.on {
  background: #0696d7;
}

.delta b {
  position: absolute;
  left: 6px;
  top: 2px;
  color: #1b87d6;
}

.pick {
  position: relative;
  width: 65px;
}

.pick select {
  appearance: none;
  display: block;
  width: 100%;
  height: 16px;
  padding: 0 4px;
  border: 1px solid #ccc;
  border-radius: 0;
  background: #fff;
  font: inherit;
  color: inherit;
}

.pick .caret {
  position: absolute;
  right: 4px;
  top: 7px;
}

.tick {
  width: 15px;
  display: flex;
  justify-content: center;
}

.tick input {
  appearance: none;
  width: 9px;
  height: 9px;
  margin: 0;
  border: 1px solid #777;
  border-radius: 2px;
  background: linear-gradient(#fafafa, #dcdcdc);
}

.tick input:checked::before {
  content: "";
  display: block;
  width: 7px;
  height: 7px;
  background: #222;
  clip-path: polygon(8% 50%, 24% 36%, 42% 56%, 82% 4%, 98% 18%, 44% 90%);
}

.look {
  width: 15px;
}

.types {
  display: flex;
  gap: 8px;
  padding-left: 2px;
}

.panel-foot {
  height: 22px;
  display: flex;
  align-items: center;
  justify-content: flex-end;
  padding: 0 7px 0 5px;
}

.info {
  width: 8px;
  height: 8px;
  margin-right: auto;
  border-radius: 50%;
  background: #000;
  color: #fff;
  font: bold 7px/8px "Liberation Serif", serif;
  text-align: center;
}

.btn {
  height: 13px;
  min-width: 39px;
  padding: 0 2px;
  border: 1px solid #c4c4c4;
  font-size: 8px;
  color: #666;
}

.nav-bar {
  position: absolute;
  left: 50%;
  bottom: 3px;
  transform: translateX(-50%);
  height: 15px;
  display: flex;
  gap: 4px;
  padding: 0 1px;
  background: #f1f1f1;
}

.nav-bar button {
  gap: 1px;
}

.status {
  position: absolute;
  right: 27px;
  bottom: 5px;
  margin: 0;
  font-weight: bold;
  line-height: 8px;
  color: #333;
}

/* timeline */
.timeline {
  height: 27px;
  background: #f1f1f1;
  padding-left: 87px;
}

.track {
  position: relative;
  width: 649px;
  height: 26px;
  display: flex;
  border-bottom: 1px solid #ccc;
}

.feature {
  flex: 1;
  height: 15px;
  margin-top: 8px;
  position: relative;
}

.feature::after {
  content: "";
  position: absolute;
  left: 50%;
  top: 15px;
  height: 3px;
  border-left: 1px solid #bbb;
}

.feature.on {
  background: #0696d7;
}

.playhead {
  position: absolute;
  right: -4px;
  top: 7px;
}
</style>
